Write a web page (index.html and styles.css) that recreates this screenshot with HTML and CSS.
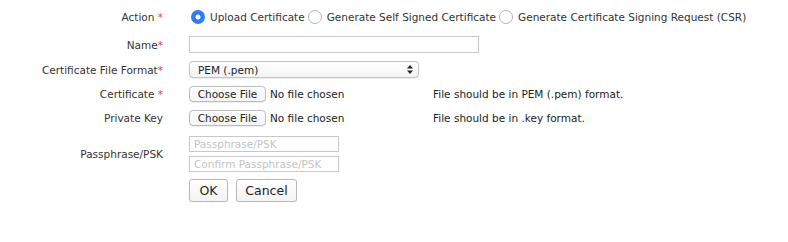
FILE: index.html
```html
<!DOCTYPE html>
<html lang="en">

<head>
  <meta charset="UTF-8">
  <title>Certificate</title>
  <link rel="stylesheet" href="styles.css">
</head>

<body>
  <form class="cert-form">
    <!-- Action -->
    <div class="row row-action">
      <div class="label">Action <span class="req">*</span></div>
      <div class="controls radios">
        <label class="radio"><input type="radio" name="action" checked> Upload Certificate</label>
        <label class="radio"><input type="radio" name="action"> Generate Self Signed Certificate</label>
        <label class="radio"><input type="radio" name="action"> Generate Certificate Signing Request (CSR)</label>
      </div>
    </div>

    <div class="row row-name">
      <div class="label">Name<span class="req">*</span></div>
      <div class="controls"><input type="text" class="text-input name-input"></div>
    </div>

    <div class="row row-format">
      <div class="label">Certificate File Format<span class="req">*</span></div>
      <div class="controls">
        <div class="select-wrap">
          <select class="select">
            <option>PEM (.pem)</option>
            <option>DER (.der)</option>
            <option>PKCS12 (.p12)</option>
          </select>
          <svg class="select-arrows" width="6" height="9" viewBox="0 0 6 9">
            <path d="M3 0 L6 3.5 L0 3.5 Z M3 9 L6 5.5 L0 5.5 Z" fill="#222"/>
          </svg>
        </div>
      </div>
    </div>

    <div class="row row-file">
      <div class="label">Certificate <span class="req">*</span></div>
      <div class="controls file-cell">
        <span class="file-btn">Choose File</span><span class="file-name">No file chosen</span>
      </div>
      <div class="help">File should be in PEM (.pem) format.</div>
    </div>

    <div class="row row-file">
      <div class="label">Private Key</div>
      <div class="controls file-cell">
        <span class="file-btn">Choose File</span><span class="file-name">No file chosen</span>
      </div>
      <div class="help">File should be in .key format.</div>
    </div>

    <div class="row row-pass">
      <div class="label">Passphrase/PSK</div>
      <div class="controls stack">
        <input type="password" class="text-input pass-input" placeholder="Passphrase/PSK">
        <input type="password" class="text-input pass-input" placeholder="Confirm Passphrase/PSK">
      </div>
    </div>

    <div class="row row-buttons">
      <div class="label"></div>
      <div class="controls buttons">
        <button type="submit" class="btn btn-ok">OK</button>
        <button type="button" class="btn btn-cancel">Cancel</button>
      </div>
    </div>
  </form>
</body>

</html>
```

FILE: styles.css
```css
/* General */
body {
  margin: 0;
  padding: 8px 0 0 0;
  background: #fff;
  font-family: 'DejaVu Sans', sans-serif;
  font-size: 10.5px;
  color: #333;
}

.cert-form {
  display: flex;
  flex-direction: column;
}

/* Rows */
.row {
  display: flex;
  align-items: center;
}

.label {
  width: 165px;
  flex-shrink: 0;
  text-align: right;
  box-sizing: border-box;
  padding-right: 2px;
  margin-right: 24px;
}

.req {
  color: #e8413a;
}

.row-action {
  height: 18px;
}

.row-name {
  margin-top: 10px;
}

.row-format {
  margin-top: 8px;
}

.row-file {
  margin-top: 8px;
}

.row-pass {
  margin-top: 10px;
}

.row-buttons {
  margin-top: 7px;
}

/* Radios */
.radios {
  display: flex;
  align-items: center;
}

.radio {
  display: flex;
  align-items: center;
  margin-right: 1px;
}

.radio input {
  appearance: none;
  -webkit-appearance: none;
  width: 14px;
  height: 14px;
  margin: 0 5px 0 2px;
  border: 1px solid #b4b4b4;
  border-radius: 50%;
  background: #fff;
  box-sizing: border-box;
}

.radio input:checked {
  border: none;
  background: radial-gradient(circle, #fff 0 2.2px, #2f7cf6 2.8px);
}

/* Inputs */
.text-input {
  display: block;
  height: 17px;
  padding: 0 4px;
  margin: 0;
  border: 1px solid #c8c8c8;
  box-sizing: border-box;
  font-family: inherit;
  font-size: 10.5px;
  color: #333;
  outline: none;
}

.text-input::placeholder {
  color: #c4c4c4;
}

.name-input {
  width: 290px;
}

.pass-input {
  width: 150px;
  height: 16px;
}

.stack {
  display: flex;
  flex-direction: column;
  gap: 4px;
}

/* Select */
.select-wrap {
  position: relative;
  width: 230px;
}

.select {
  appearance: none;
  -webkit-appearance: none;
  display: block;
  width: 100%;
  height: 17px;
  margin: 0;
  padding: 0 8px;
  border: 1px solid #c2c2c2;
  border-radius: 4px;
  background: linear-gradient(#fff, #f4f4f4);
  font-family: inherit;
  font-size: 10.5px;
  color: #222;
  box-shadow: 0 0.5px 0.5px rgba(0, 0, 0, 0.12);
}

.select-arrows {
  position: absolute;
  right: 6px;
  top: 4px;
  pointer-events: none;
}

/* File picker */
.file-cell {
  width: 244px;
  display: flex;
  align-items: center;
}

.file-btn {
  display: inline-block;
  width: 77px;
  height: 16px;
  line-height: 14px;
  border: 1px solid #bcbcbc;
  border-radius: 4px;
  box-sizing: border-box;
  text-align: center;
  background: linear-gradient(#fff, #f6f6f6);
  color: #222;
  box-shadow: 0 0.5px 0.5px rgba(0, 0, 0, 0.12);
}

.file-name {
  margin-left: 4px;
  color: #222;
}

.help {
  color: #222;
}

/* Buttons */
.buttons {
  display: flex;
  gap: 8px;
}

.btn {
  height: 23px;
  padding: 0;
  border: 1px solid #b8b8b8;
  border-radius: 3px;
  background: linear-gradient(#fff, #f3f3f3);
  box-shadow: 0 1px 1px rgba(0, 0, 0, 0.15);
  font-family: inherit;
  font-size: 12.5px;
  color: #222;
}

.btn-ok {
  width: 39px;
}

.btn-cancel {
  width: 61px;
}
```
